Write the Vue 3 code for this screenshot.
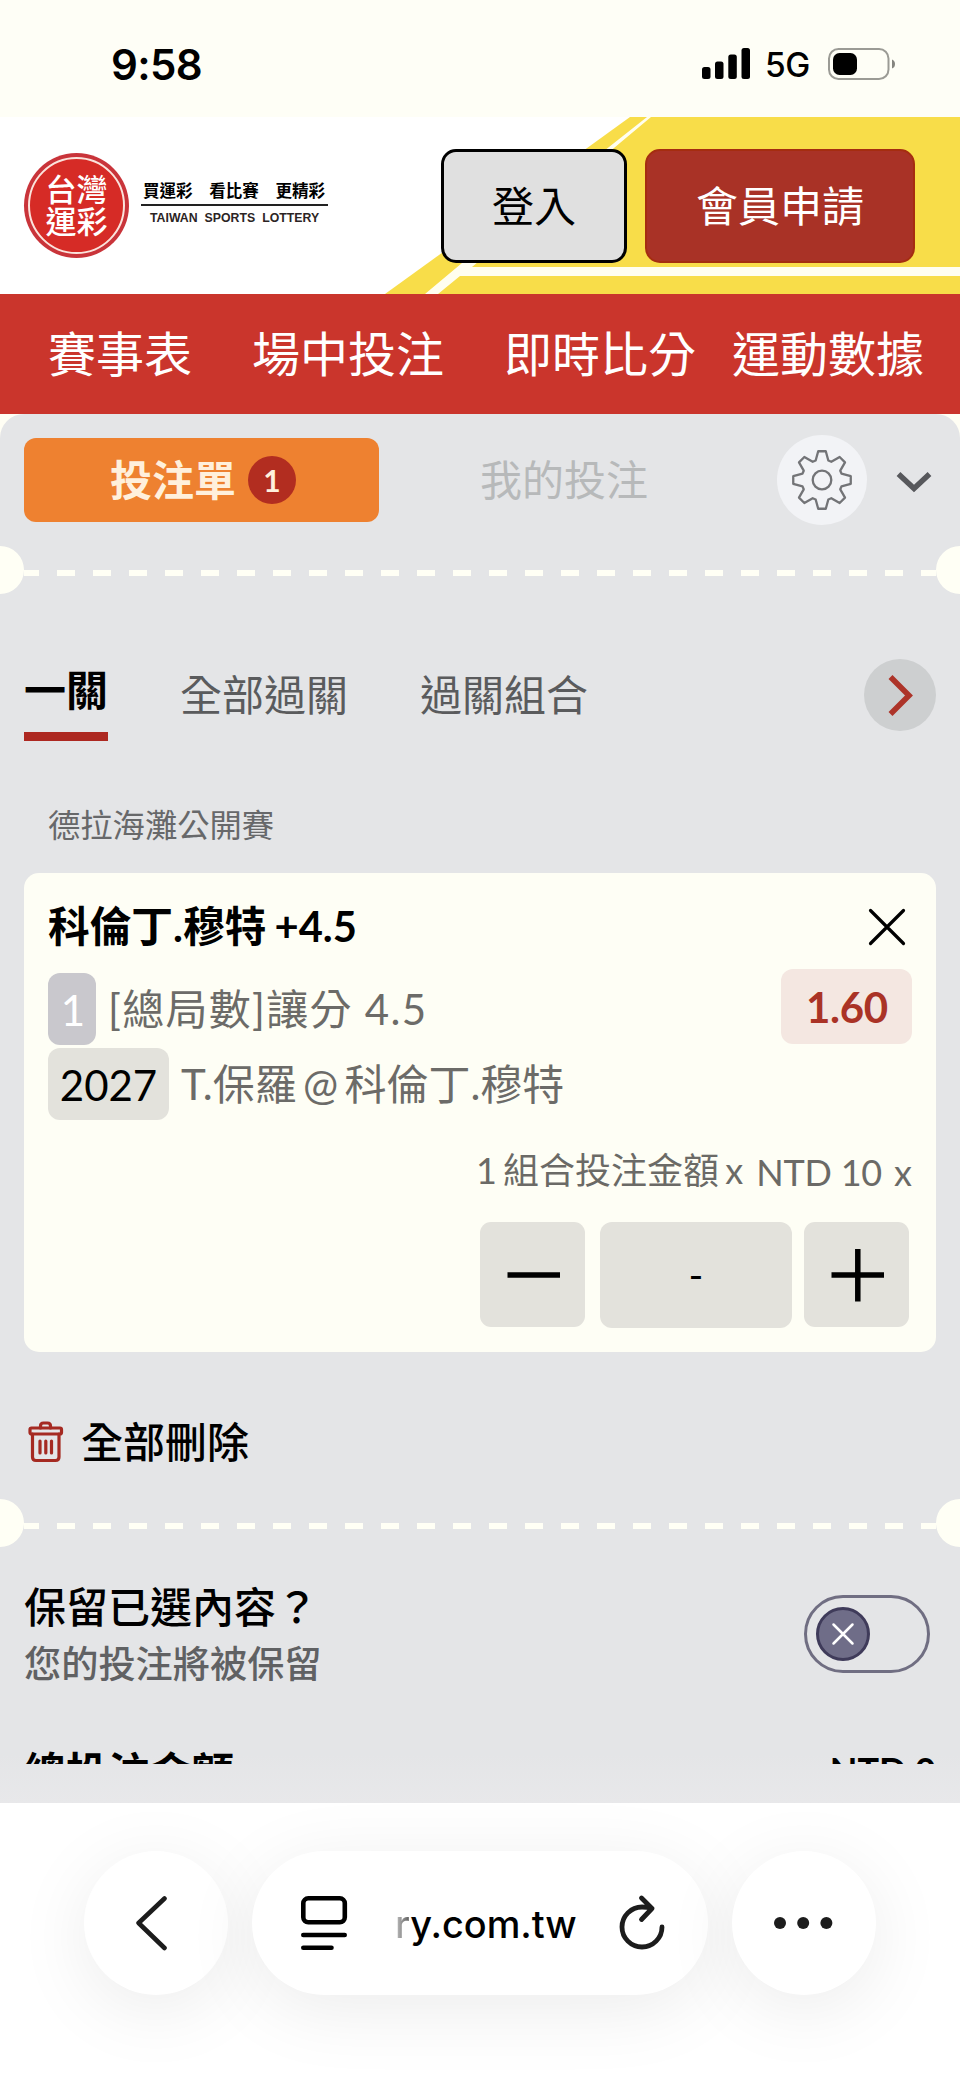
<script setup>
const navItems = ['賽事表', '場中投注', '即時比分', '運動數據']
const slogans = ['買運彩', '看比賽', '更精彩']

// Outline of an eight-toothed gear centred on 0,0
const gearPath = (() => {
  const outer = 29
  const inner = 20.5
  const points = []
  for (let i = 0; i < 8; i++) {
    const mid = (i * 45 - 90) * Math.PI / 180
    for (const [r, deg] of [[inner, -18], [outer, -7.5], [outer, 7.5], [inner, 18]]) {
      const a = mid + deg * Math.PI / 180
      points.push(`${(r * Math.cos(a)).toFixed(2)} ${(r * Math.sin(a)).toFixed(2)}`)
    }
  }
  return `M${points.join('L')}Z`
})()
</script>

<template>
  <div class="screen">
    <div class="status">
      <span class="time">9:58</span>
      <div class="status-icons">
        <svg class="signal" width="48" height="31" viewBox="0 0 48 31">
          <rect x="0" y="19" width="8.5" height="12" rx="2.5" />
          <rect x="13" y="13.5" width="8.5" height="17.5" rx="2.5" />
          <rect x="26.3" y="6.5" width="8.5" height="24.5" rx="2.5" />
          <rect x="39.5" y="0" width="8.5" height="31" rx="2.5" />
        </svg>
        <span class="network">5G</span>
        <svg class="battery" width="68" height="32" viewBox="0 0 68 32">
          <rect x="1" y="1" width="59.5" height="30" rx="9.5" fill="none" stroke="#9b9b95" stroke-width="2" />
          <rect x="5" y="5" width="24" height="22" rx="6.5" fill="#000" />
          <path d="M64 11.5 Q67 12.5 67 16 Q67 19.500 64 20.500Z" fill="#85857f" />
        </svg>
      </div>
    </div>

    <header class="header">
      <svg class="stripes" width="960" height="177" viewBox="0 0 960 177">
        <path d="M630 0H960V177H385Z" fill="#f8dd49" />
        <path d="M647 0L462 146L425 177H438L460 159H960V150H472L651 0Z" fill="#fffef0" />
      </svg>
      <div class="brand">
        <div class="seal">
          <div class="seal-ring">
            <span>台灣</span>
            <span>運彩</span>
          </div>
        </div>
        <div class="brand-text">
          <div class="slogan"><span v-for="s in slogans" :key="s">{{ s }}</span></div>
          <div class="brand-en">TAIWAN SPORTS LOTTERY</div>
        </div>
      </div>
      <div class="account">
        <button class="btn login">登入</button>
        <button class="btn register">會員申請</button>
      </div>
    </header>

    <nav class="nav">
      <span v-for="n in navItems" :key="n">{{ n }}</span>
    </nav>

    <div class="panel-back">
      <main class="panel">
        <div class="slip-tabs">
          <div class="slip-active"><span class="slip-name">投注單</span><span class="count">1</span></div>
          <div class="slip-mine">我的投注</div>
          <div class="gear">
            <svg width="64" height="64" viewBox="-32 -32 64 64" fill="none" stroke="#737477" stroke-width="2.300" stroke-linejoin="round">
              <path :d="gearPath" />
              <circle r="9.300" />
            </svg>
          </div>
          <svg class="caret" width="36" height="24" viewBox="0 0 36 24" fill="none" stroke="#57585c" stroke-width="5.500">
            <path d="M2.500 4L18 18.500L33.500 4" />
          </svg>
        </div>

        <div class="tear"><i class="dot left"></i><i class="dashes"></i><i class="dot right"></i></div>

        <div class="modes">
          <span class="mode current">一關</span>
          <span class="mode">全部過關</span>
          <span class="mode">過關組合</span>
          <span class="next">
            <svg width="30" height="44" viewBox="0 0 30 44" fill="none" stroke="#ad3429" stroke-width="5.600">
              <path d="M5.500 4L24 22.500L5.500 41" />
            </svg>
          </span>
        </div>

        <div class="league">德拉海灘公開賽</div>

        <section class="card">
          <div class="pick">
            <span>科倫丁.穆特 +4.5</span>
            <svg width="38" height="38" viewBox="0 0 38 38" stroke="#000" stroke-width="3.200" stroke-linecap="round">
              <path d="M2.500 2.500L35.500 35.500M35.500 2.500L2.500 35.500" />
            </svg>
          </div>
          <div class="lines">
            <div class="matchup">
              <div class="line"><b class="tag tag-one">1</b><span class="market">[總局數]讓分 4.5</span></div>
              <div class="line"><b class="tag tag-code">2027</b><span class="teams">T.保羅 @ 科倫丁.穆特</span></div>
            </div>
            <div class="odds">1.60</div>
          </div>
          <div class="stake-label"><span class="combo">1 組合投注金額 x</span><span class="unit">NTD 10</span><span class="times">x</span></div>
          <div class="stepper">
            <button class="step">
              <svg width="54" height="54" viewBox="0 0 54 54" stroke="#000" stroke-width="5.500"><path d="M1.500 27H54" /></svg>
            </button>
            <div class="amount">-</div>
            <button class="step">
              <svg width="54" height="54" viewBox="0 0 54 54" stroke="#000" stroke-width="5.500"><path d="M1.500 27H54M27.800 1V53.500" /></svg>
            </button>
          </div>
        </section>

        <div class="clear">
          <svg width="36" height="42" viewBox="0 0 36 42" fill="none" stroke="#a52a22" stroke-width="3.200" stroke-linejoin="round" stroke-linecap="round">
            <rect x="2" y="7" width="31.500" height="6" rx="1.500" />
            <path d="M12.500 7V5Q12.500 2 15.500 2H19.500Q22.500 2 22.500 5V7M4.500 13V36Q4.500 39.500 8 39.500H27.500Q31 39.500 31 36V13" />
            <path d="M12 20V32M17.800 20V32M23.500 20V32" />
          </svg>
          <span>全部刪除</span>
        </div>

        <div class="tear"><i class="dot left"></i><i class="dashes"></i><i class="dot right"></i></div>

        <div class="keep">
          <div>
            <div class="keep-title">保留已選內容？</div>
            <div class="keep-note">您的投注將被保留</div>
          </div>
          <div class="toggle">
            <div class="knob">
              <svg width="24" height="24" viewBox="0 0 24 24" stroke="#fff" stroke-width="2.500" stroke-linecap="round">
                <path d="M2.500 2.500L21.500 21.500M21.500 2.500L2.500 21.500" />
              </svg>
            </div>
          </div>
        </div>

        <div class="total"><span>總投注金額</span><span class="total-value">NTD 0</span></div>
      </main>
    </div>

    <footer class="browser">
      <div class="bubble">
        <svg width="40" height="60" viewBox="0 0 40 60" fill="none" stroke="#1c1c1c" stroke-width="4.600" stroke-linecap="round" stroke-linejoin="round">
          <path d="M28.500 5.500L2.600 30L28.500 55" />
        </svg>
      </div>
      <div class="bubble address">
        <svg width="48" height="56" viewBox="0 0 48 56" fill="none" stroke="#000" stroke-width="4.600" stroke-linecap="round">
          <rect x="3.300" y="3.300" width="41.500" height="24" rx="5" />
          <path d="M3.300 40H44.700M3.300 52.700H31.500" />
        </svg>
        <span class="url"><span class="fade">r</span>y.com.tw</span>
        <svg class="reload" width="48" height="56" viewBox="0 0 48 56" fill="none" stroke="#1c1c1c" stroke-width="4.800" stroke-linecap="round" stroke-linejoin="round">
          <path d="M44 33A20 20 0 1 1 24 13Q29 13 34 14.500M23.500 4L34 14.500L23.500 25.500" />
        </svg>
      </div>
      <div class="bubble">
        <svg width="60" height="14" viewBox="0 0 60 14" fill="#1c1c1c">
          <circle cx="6" cy="7" r="6" /><circle cx="29.200" cy="7" r="6" /><circle cx="52.400" cy="7" r="6" />
        </svg>
      </div>
    </footer>
  </div>
</template>

<style>
body {
  margin: 0;
}
</style>

<style scoped>
.screen {
  width: 960px;
  height: 2079px;
  overflow: hidden;
  background: #fff;
  font-family: Lato, "Noto Sans CJK TC", sans-serif;
  color: #000;
  display: flex;
  flex-direction: column;
  white-space: nowrap;
}
.screen * {
  box-sizing: border-box;
}
.screen > * {
  flex: none;
}
svg {
  display: block;
  flex: none;
}
button {
  border: 0;
  margin: 0;
  padding: 0;
  font-family: inherit;
}

.status {
  height: 117px;
  background: #fefef6;
  display: flex;
  justify-content: space-between;
  padding: 0 64px 0 111px;
  font-family: Inter, sans-serif;
}
.time {
  font-size: 42px;
  font-weight: 600;
  letter-spacing: -0.600px;
  line-height: 129px;
}
.status-icons {
  display: flex;
  height: 127px;
  align-items: center;
}
.network {
  font-size: 33.500px;
  font-weight: 500;
  letter-spacing: -0.500px;
  width: 44px;
  margin: 3px 19px 0 15px;
}

.header {
  position: relative;
  height: 177px;
  background: #fff;
  display: flex;
  justify-content: space-between;
  padding: 32px 45px 0 24px;
}
.stripes {
  position: absolute;
  left: 0;
  top: 0;
}
.brand {
  position: relative;
  display: flex;
  padding-top: 4px;
  gap: 12px;
}
.seal {
  width: 105px;
  height: 105px;
  border-radius: 50%;
  background: #c9343a;
  padding: 4px;
}
.seal-ring {
  height: 97px;
  border-radius: 50%;
  border: 2px solid #fbe3dc;
  background: #d62b26;
  color: #fff;
  font-size: 31px;
  font-weight: 500;
  line-height: 32px;
  display: flex;
  flex-direction: column;
  align-items: center;
  padding-top: 14px;
}
.brand-text {
  width: 187px;
  padding-top: 28px;
}
.slogan {
  display: flex;
  justify-content: space-between;
  height: 25px;
  padding: 0 3px 0 2px;
  border-bottom: 2px solid #222;
  font-size: 16.500px;
  line-height: 20px;
  font-weight: 700;
}
.brand-en {
  font: 700 12.300px/14px "Liberation Sans", Arial, sans-serif;
  color: #2b2424;
  word-spacing: 3.600px;
  padding: 5px 0 0 9px;
}
.account {
  position: relative;
  display: flex;
  gap: 18px;
}
.btn {
  height: 114px;
  border-radius: 15px;
  font-size: 42px;
  line-height: 108px;
}
.login {
  width: 186px;
  background: #e0e0e0;
  border: 3px solid #000;
  color: #000;
}
.register {
  width: 270px;
  background: #a93226;
  border: 2px solid #a52d10;
  color: #fff;
}

.nav {
  height: 120px;
  background: #ca352c;
  color: #fff;
  display: flex;
  gap: 60px;
  padding-left: 48px;
  font-size: 48px;
  line-height: 120px;
}
.nav span:last-child {
  margin-left: -24px;
}

.panel-back {
  height: 1389px;
  background: #fffef4;
}
.panel {
  height: 1389px;
  border-radius: 24px 24px 0 0;
  background: linear-gradient(#e4e5e7 0, #e4e5e7 1340px, #e8e8ea 1389px);
  display: flex;
  flex-direction: column;
}
.slip-tabs {
  height: 132px;
  display: flex;
  align-items: center;
  padding: 0 28px 0 24px;
}
.slip-active {
  width: 355px;
  height: 84px;
  border-radius: 12px;
  background: #ee8130;
  color: #fff0dc;
  font-size: 42px;
  font-weight: 700;
  display: flex;
  align-items: center;
  padding-left: 86px;
}
.slip-name {
  line-height: 84px;
}
.count {
  width: 48px;
  height: 48px;
  border-radius: 50%;
  background: #b22d20;
  margin-left: 12px;
  font-size: 30px;
  font-weight: 700;
  line-height: 48px;
  text-align: center;
}
.slip-mine {
  margin-left: 101px;
  width: 168px;
  font-size: 42px;
  line-height: 84px;
  color: #b7b9ba;
}
.gear {
  margin-left: 129px;
  width: 90px;
  height: 90px;
  border-radius: 50%;
  background: #f2f3f6;
  display: flex;
  align-items: center;
  justify-content: center;
}
.caret {
  margin: 4px 0 0 28.500px;
}

.tear {
  height: 48px;
  display: flex;
  overflow: hidden;
}
.dot {
  flex: none;
  width: 48px;
  height: 48px;
  border-radius: 50%;
  background: #fffff5;
}
.dot.left {
  margin-left: -24px;
}
.dot.right {
  margin-right: -24px;
}
.dashes {
  flex: 1;
  height: 6px;
  margin-top: 24px;
  background: repeating-linear-gradient(90deg, #fffff5 0 15px, transparent 15px 33px, #fffff5 33px 36px);
}

.modes {
  height: 153px;
  margin-top: 52px;
  padding: 0 24px;
  display: flex;
  gap: 72px;
  font-size: 42px;
  color: #5a5b5d;
}
.mode {
  line-height: 98px;
}
.mode.current {
  height: 95px;
  line-height: 88px;
  color: #000;
  font-weight: 700;
  border-bottom: 9px solid #ad2821;
}
.next {
  width: 72px;
  height: 72px;
  border-radius: 50%;
  background: #cdcfd0;
  margin: 13px 0 0 auto;
  display: flex;
  align-items: center;
  justify-content: center;
}
.league {
  height: 74px;
  padding-left: 48px;
  font-size: 32.300px;
  line-height: 52px;
  color: #67686a;
}

.card {
  margin: 0 24px;
  height: 479px;
  border-radius: 15px;
  background: #fefef5;
  padding: 0 24px;
}
.pick {
  height: 96px;
  display: flex;
  justify-content: space-between;
  font-size: 41.700px;
  font-weight: 700;
  word-spacing: -2px;
  line-height: 107px;
}
.pick svg {
  margin: 35px 6px 0 0;
}
.lines {
  display: flex;
  justify-content: space-between;
}
.matchup {
  display: flex;
  flex-direction: column;
  gap: 3px;
  padding-top: 4px;
}
.line {
  height: 72px;
  display: flex;
  font-size: 42px;
  line-height: 73px;
  color: #6c6b68;
}
.tag {
  height: 72px;
  border-radius: 12px;
  font-weight: 400;
  line-height: 75px;
  text-align: center;
}
.tag-one {
  width: 48px;
  background: #c9c8cd;
  color: #fff;
  padding-left: 2px;
}
.tag-code {
  width: 121px;
  background: #e3e2dc;
  color: #000;
}
.market {
  margin-left: 12px;
  letter-spacing: 1.300px;
}
.teams {
  margin-left: 12px;
  word-spacing: -4.500px;
}
.odds {
  width: 131px;
  height: 75px;
  border-radius: 12px;
  background: #f4e7e1;
  color: #aa3326;
  font-size: 42px;
  font-weight: 700;
  line-height: 77px;
  text-align: center;
  letter-spacing: -0.300px;
  padding-left: 1px;
}
.stake-label {
  height: 54px;
  margin-top: 26px;
  display: flex;
  justify-content: flex-end;
  font-size: 36px;
  line-height: 49px;
  color: #6b6a66;
}
.combo {
  word-spacing: -3px;
}
.unit {
  margin-left: 13px;
  padding-top: 2px;
  letter-spacing: -0.200px;
}
.times {
  margin-left: 12px;
  padding-top: 2px;
}
.stepper {
  margin-top: 22px;
  display: flex;
  justify-content: flex-end;
  padding-right: 3px;
}
.step {
  width: 105px;
  height: 105px;
  border-radius: 11px;
  background: #e3e2dc;
  display: flex;
  align-items: center;
  justify-content: center;
}
.amount {
  width: 192px;
  height: 106px;
  margin: 0 12px 0 15px;
  border-radius: 12px;
  background: #e3e2dc;
  text-align: center;
  font-size: 40px;
  line-height: 106px;
}

.clear {
  height: 147px;
  padding: 69px 0 0 28px;
  display: flex;
  gap: 17px;
  font-size: 42px;
  font-weight: 500;
  line-height: 42px;
}

.keep {
  height: 191px;
  display: flex;
  justify-content: space-between;
  padding: 30px 30px 0 24px;
  font-weight: 500;
}
.keep-title {
  font-size: 42px;
  line-height: 60px;
}
.keep-note {
  font-size: 37.200px;
  line-height: 54px;
  color: #606163;
}
.toggle {
  width: 126px;
  height: 78px;
  margin-top: 18px;
  border: 3px solid #706e82;
  border-radius: 39px;
  padding: 9px;
}
.knob {
  width: 54px;
  height: 54px;
  border-radius: 50%;
  background: #6f6d88;
  border: 3px solid #3f3b5a;
  display: flex;
  align-items: center;
  justify-content: center;
}
.total {
  height: 26px;
  overflow: hidden;
  display: flex;
  justify-content: space-between;
  padding: 0 24px;
  font-size: 42px;
  font-weight: 700;
  line-height: 68px;
}
.total-value {
  font-size: 36px;
  line-height: 64px;
}

.browser {
  height: 276px;
  background: #fff;
  display: flex;
  gap: 24px;
  padding: 48px 84px 0;
  overflow: hidden;
}
.bubble {
  width: 144px;
  height: 144px;
  border-radius: 72px;
  background: #fff;
  box-shadow: 0 14px 76px rgba(0, 0, 0, 0.080);
  display: flex;
  align-items: center;
  justify-content: center;
}
.address {
  width: 456px;
  justify-content: flex-start;
  padding-left: 48px;
}
.url {
  width: 184px;
  margin-left: 47px;
  padding-top: 2px;
  font: 500 37.900px/72px Inter, sans-serif;
}
.fade {
  background: linear-gradient(90deg, #c4c4c4, #5a5a5a);
  background-clip: text;
  color: transparent;
}
.reload {
  margin: 0 0 3px 39px;
}
</style>
